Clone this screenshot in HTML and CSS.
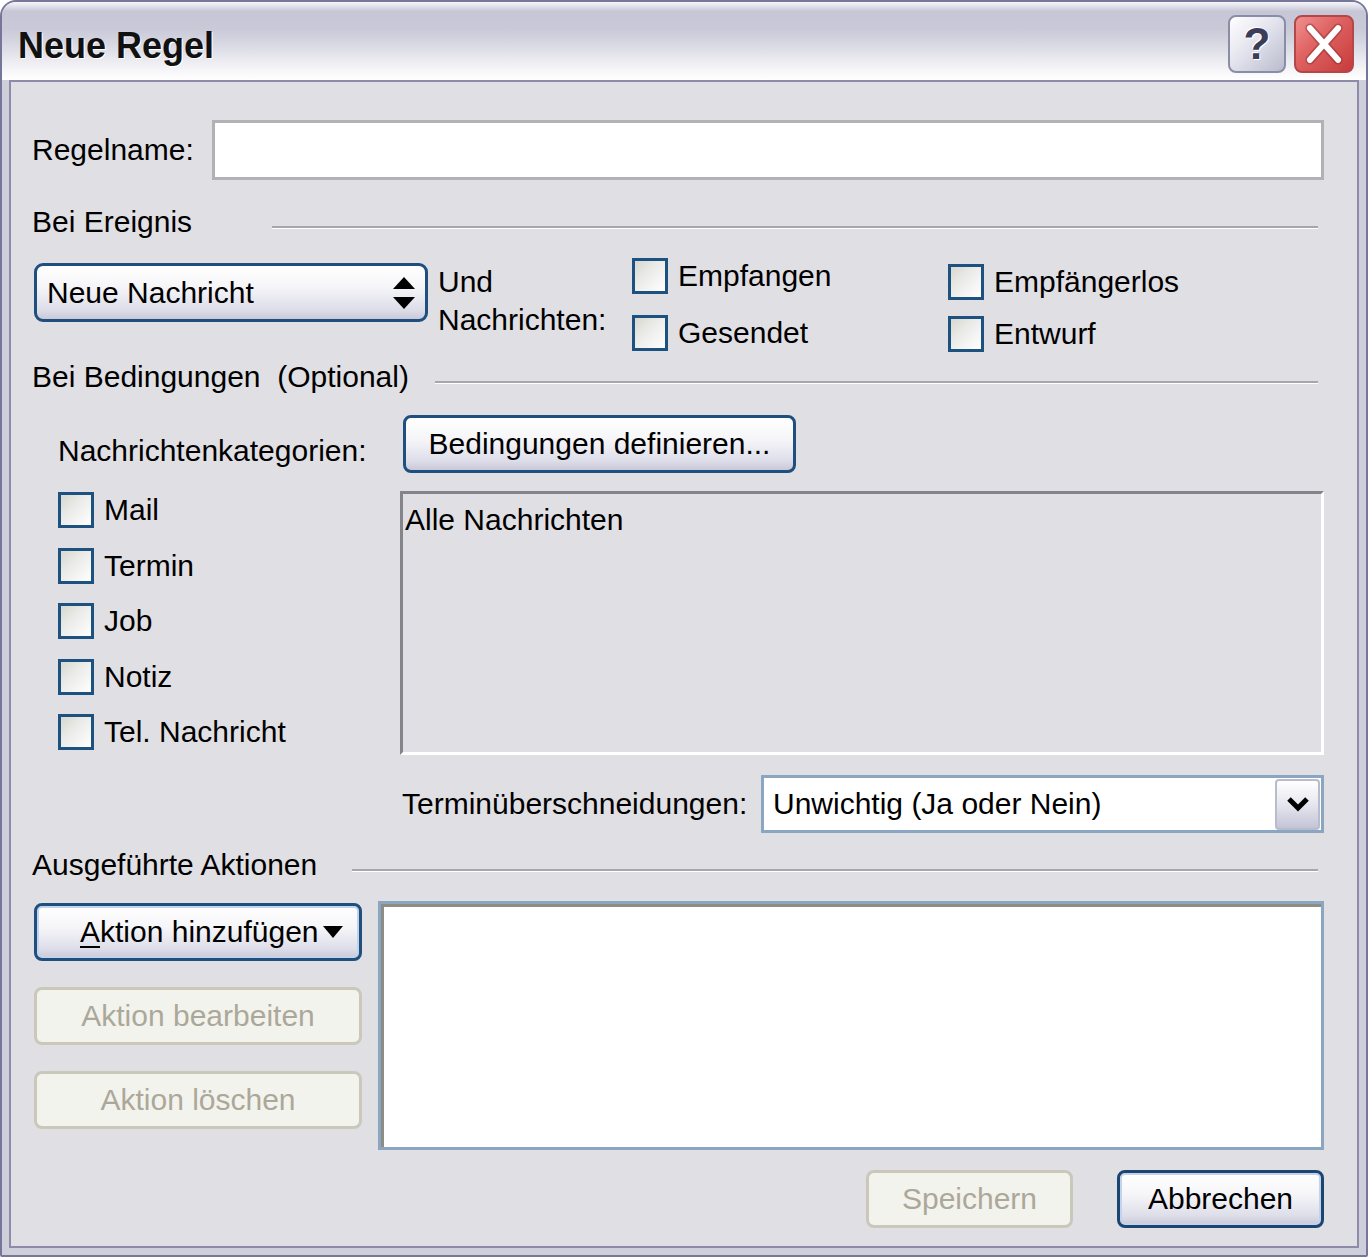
FILE: index.html
```html
<!DOCTYPE html>
<html lang="de">
<head>
    <meta charset="UTF-8">
    <title>Neue Regel</title>
    <link rel="stylesheet" href="styles.css">
</head>
<body>
    <div class="window">
        <div class="titlebar">
            <span class="title">Neue Regel</span>
            <div class="title-buttons">
                <span class="cap-btn help-btn">?</span>
                <span class="cap-btn close-btn">
                    <svg width="60" height="58" viewBox="0 0 60 58">
                        <path d="M15 12 L45 46 M45 12 L15 46" stroke="#8a2a2a" stroke-width="10" stroke-linecap="round" opacity="0.45"/>
                        <path d="M15 12 L45 46 M45 12 L15 46" stroke="#ffffff" stroke-width="6.5" stroke-linecap="round"/>
                    </svg>
                </span>
            </div>
        </div>

        <div class="client">
            <div class="name-row">
                <span class="name-label">Regelname:</span>
                <div class="text-field"></div>
            </div>

            <div class="group-title">
                <span class="group-label label-event">Bei Ereignis</span>
                <span class="rule"></span>
            </div>

            <div class="event-row">
                <div class="select-btn">
                    <span>Neue Nachricht</span>
                    <svg width="24" height="34" viewBox="0 0 24 34">
                        <polygon points="12,1 23,13 1,13" fill="#000"/>
                        <polygon points="1,21 23,21 12,33" fill="#000"/>
                    </svg>
                </div>
                <div class="und-label">Und<br>Nachrichten:</div>
                <div class="check-col col-a">
                    <label class="check"><span class="box"></span>Empfangen</label>
                    <label class="check"><span class="box"></span>Gesendet</label>
                </div>
                <div class="check-col col-b">
                    <label class="check"><span class="box"></span>Empfängerlos</label>
                    <label class="check"><span class="box"></span>Entwurf</label>
                </div>
            </div>

            <div class="group-title">
                <span class="group-label label-cond">Bei Bedingungen  (Optional)</span>
                <span class="rule"></span>
            </div>

            <div class="cond">
                <div class="cond-side">
                    <div class="cat-label">Nachrichtenkategorien:</div>
                    <div class="cat-list">
                        <label class="check"><span class="box"></span>Mail</label>
                        <label class="check"><span class="box"></span>Termin</label>
                        <label class="check"><span class="box"></span>Job</label>
                        <label class="check"><span class="box"></span>Notiz</label>
                        <label class="check"><span class="box"></span>Tel. Nachricht</label>
                    </div>
                </div>
                <div class="cond-main">
                    <div class="btn cond-btn">Bedingungen definieren...</div>
                    <div class="cond-list">Alle Nachrichten</div>
                    <div class="overlap-row">
                        <span class="overlap-label">Terminüberschneidungen:</span>
                        <div class="combo">
                            <span>Unwichtig (Ja oder Nein)</span>
                            <span class="combo-arrow">
                                <svg width="24" height="16" viewBox="0 0 24 16">
                                    <path d="M3 3 L12 12 L21 3" fill="none" stroke="#000" stroke-width="5"/>
                                </svg>
                            </span>
                        </div>
                    </div>
                </div>
            </div>

            <div class="group-title">
                <span class="group-label label-action">Ausgeführte Aktionen</span>
                <span class="rule"></span>
            </div>

            <div class="actions">
                <div class="action-btns">
                    <div class="btn add-btn"><span><u>A</u>ktion hinzufügen</span><span class="tri"></span></div>
                    <div class="btn disabled">Aktion bearbeiten</div>
                    <div class="btn disabled">Aktion löschen</div>
                </div>
                <div class="action-list"></div>
            </div>

            <div class="footer">
                <div class="btn disabled foot-btn">Speichern</div>
                <div class="btn default foot-btn">Abbrechen</div>
            </div>
        </div>
    </div>
</body>
</html>
```

FILE: styles.css
```css
* {
    margin: 0;
    padding: 0;
    box-sizing: border-box;
}

body {
    font-family: 'Liberation Sans', Arial, sans-serif;
    font-size: 30px;
    color: #000;
    background-color: #ffffff;
}

.window {
    width: 1368px;
    height: 1257px;
    display: flex;
    flex-direction: column;
    background-color: #cfcfdc;
    border: 2px solid #76769a;
    border-radius: 16px 16px 2px 2px;
    overflow: hidden;
}

.titlebar {
    height: 78px;
    display: flex;
    align-items: center;
    justify-content: space-between;
    padding: 6px 12px 0 16px;
    background: linear-gradient(#f6f6f9 0%, #c6c6d6 12%, #c9c9d8 35%, #dfdfe8 62%, #f4f4f7 85%, #ffffff 100%);
}

.title {
    font-weight: bold;
    font-size: 36px;
    color: #111;
    margin-top: 4px;
    text-shadow: 1px 1px 0 #fff;
}

.title-buttons {
    display: flex;
    gap: 8px;
}

.cap-btn {
    width: 58px;
    height: 58px;
    border-radius: 8px;
    display: flex;
    align-items: center;
    justify-content: center;
}

.help-btn {
    border: 2px solid #8a8da6;
    background: linear-gradient(135deg, #ffffff 0%, #e4e4ee 45%, #b9bccd 100%);
    font-weight: bold;
    font-size: 44px;
    color: #3a3c58;
    text-shadow: 1px 1px 0 #fff, -1px -1px 0 #fff;
}

.close-btn {
    width: 60px;
    border: 2px solid #b34848;
    background: linear-gradient(135deg, #f09090 0%, #e06464 40%, #c83c3c 100%);
}

.client {
    flex: 1;
    margin: 0 7px 7px;
    border: 2px solid #8c8ca8;
    background-color: #e0dfe3;
    padding: 38px 33px 0 21px;
    display: flex;
    flex-direction: column;
}

/* Regelname */
.name-row {
    display: flex;
    align-items: center;
    height: 60px;
}

.name-label {
    width: 180px;
}

.text-field {
    flex: 1;
    height: 60px;
    background-color: #fff;
    border: 3px solid #b1b1b6;
}

/* group headers */
.group-title {
    display: flex;
    align-items: center;
    height: 30px;
    margin-top: 27px;
}

.group-label {
    white-space: pre;
}

.label-event { width: 240px; }
.label-cond { width: 403px; }
.label-action { width: 320px; }

.rule {
    flex: 1;
    height: 3px;
    margin: 10px 6px 0 0;
    border-top: 2px solid #a7a6ac;
    border-bottom: 1px solid #ffffff;
}

/* Bei Ereignis */
.event-row {
    display: flex;
    align-items: flex-start;
    height: 100px;
    margin-top: 18px;
}

.event-row + .group-title {
    margin-top: 7px;
}

.select-btn {
    width: 394px;
    height: 59px;
    margin: 8px 0 0 2px;
    padding: 0 9px 0 10px;
    display: flex;
    align-items: center;
    justify-content: space-between;
    border: 3px solid #1f4f7e;
    border-radius: 9px;
    background: linear-gradient(#ffffff 0%, #f5f5f8 40%, #dcdce8 85%, #c9c9d8 100%);
}

.und-label {
    width: 194px;
    margin: 8px 0 0 10px;
    line-height: 38px;
}

.check-col {
    display: flex;
    flex-direction: column;
}

.col-a {
    width: 316px;
    margin-top: 3px;
    gap: 21px;
}

.col-b {
    margin-top: 9px;
    gap: 16px;
}

.check {
    display: flex;
    align-items: center;
    height: 36px;
    line-height: 36px;
}

.box {
    width: 36px;
    height: 36px;
    margin-right: 10px;
    border: 3px solid #1c5180;
    background: linear-gradient(135deg, #d8d8d0 0%, #ececea 45%, #ffffff 100%);
}

/* Bei Bedingungen */
.cond {
    display: flex;
    margin-top: 23px;
}

.cond + .group-title {
    margin-top: 17px;
}

.cond-side {
    width: 368px;
    padding-left: 26px;
}

.cat-label {
    height: 58px;
    padding-top: 14px;
    display: flex;
    align-items: center;
}

.cat-list {
    margin-top: 19px;
    display: flex;
    flex-direction: column;
    gap: 19.5px;
}

.cond-main {
    flex: 1;
    display: flex;
    flex-direction: column;
}

.btn {
    height: 58px;
    display: flex;
    align-items: center;
    justify-content: center;
    border: 3px solid #1f4f7e;
    border-radius: 8px;
    background: linear-gradient(#ffffff 0%, #f6f6f9 40%, #dedeea 82%, #c8c8d8 100%);
}

.cond-btn {
    width: 393px;
    margin-left: 3px;
}

.cond-list {
    height: 264px;
    margin-top: 18px;
    padding: 6px 0 0 2px;
    line-height: 40px;
    border: 3px solid;
    border-color: #84848a #ffffff #ffffff #84848a;
    background-color: #e0dfe3;
}

.overlap-row {
    display: flex;
    align-items: center;
    height: 58px;
    margin-top: 20px;
}

.overlap-label {
    width: 361px;
    padding-left: 2px;
}

.combo {
    width: 563px;
    height: 58px;
    margin-right: -2px;
    padding: 1px 1px 1px 9px;
    display: flex;
    align-items: center;
    justify-content: space-between;
    background-color: #fff;
    border: 3px solid #8aa6c2;
}

.combo-arrow {
    width: 45px;
    height: 51px;
    display: flex;
    align-items: center;
    justify-content: center;
    border: 2px solid #b9bccc;
    border-radius: 4px;
    background: linear-gradient(#ffffff 0%, #e6e6ef 50%, #c3c4d6 100%);
}

/* Ausgefuehrte Aktionen */
.actions {
    display: flex;
    height: 249px;
    margin-top: 21px;
}

.action-btns {
    width: 328px;
    margin: 2px 0 0 2px;
    display: flex;
    flex-direction: column;
    gap: 26px;
}

.add-btn {
    justify-content: flex-start;
    padding-left: 43px;
    box-shadow: inset 0 0 0 2px #c4d3ec;
}

.add-btn u {
    text-decoration-thickness: 2px;
    text-underline-offset: 4px;
}

.tri {
    width: 0;
    height: 0;
    margin-left: 4px;
    border-left: 10px solid transparent;
    border-right: 10px solid transparent;
    border-top: 12px solid #000;
}

.btn.disabled {
    color: #aca899;
    border-color: #cac8bb;
    background: #f3f3ee;
}

.action-list {
    flex: 1;
    margin-left: 16px;
    background-color: #fff;
    border: 3px solid #8aa6c2;
    box-shadow: inset 3px 3px 0 #8d8d84;
}

/* footer */
.footer {
    display: flex;
    justify-content: flex-end;
    gap: 44px;
    margin-top: 20px;
}

.foot-btn {
    width: 207px;
}

.btn.default {
    border-color: #1b4672;
    box-shadow: inset 0 0 0 2px #c4d3ec;
}
```
